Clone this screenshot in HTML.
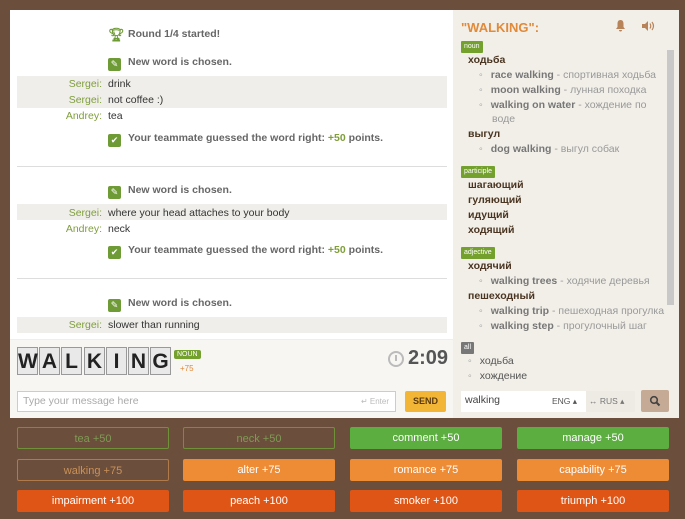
<!DOCTYPE html>
<html><head><meta charset="utf-8"><style>
*{margin:0;padding:0;box-sizing:border-box}
body{width:685px;height:519px;background:#6b4e3b;font-family:"Liberation Sans","DejaVu Sans",sans-serif;position:relative;overflow:hidden;font-size:10.5px}
.a{position:absolute;white-space:nowrap}
#chat{position:absolute;left:10px;top:10px;width:443px;height:408px;background:#fff}
#dict{position:absolute;left:453px;top:10px;width:226px;height:408px;background:#f2efe8}
.band{position:absolute;left:7px;width:430px;background:#efeeea}
.nm{color:#7f9e3c;text-align:right;width:90px;left:2px}
.tx{color:#333;left:98px}
.sys{left:98px;color:#666;font-weight:bold}
.ic{display:inline-block;width:13px;height:13px;background:#6f9b36;border-radius:2px;vertical-align:-2px;margin-right:7px;color:#fff;font-size:9px;text-align:center;line-height:13px}
.sep{position:absolute;left:7px;width:430px;height:1px;background:#ddd}
.tag{position:absolute;left:8px;background:#74a12d;color:#fff;font-size:7px;padding:1px 3px;border-radius:1px;line-height:10px}
.w{color:#4a3522;font-weight:bold;left:15px}
.li{left:26px;color:#999}
.li b{color:#777}
.li:before{content:"◦";margin-right:8px;color:#999}
.btn{position:absolute;width:152px;height:22px;color:#fff;text-align:center;line-height:22px;font-size:11px;border-radius:2px}
.g{background:#5bae3f}.o{background:#ee8b35}.r{background:#df5515}
.og{border:1px solid #6f913a;color:#7f9a55;background:transparent}
.oo{border:1px solid #b07a4a;color:#c9925a;background:transparent}
.tile{position:absolute;top:347px;width:21px;height:28px;background:#e9e9e9;border:1px solid #999;font-weight:bold;font-size:21px;text-align:center;line-height:28px;color:#222;font-family:"Liberation Sans Narrow","Liberation Sans",sans-serif}
</style></head><body>
<div id="chat">
<div class="a sys" style="top:18px"><span class="ic" style="background:none;color:#6f9b36;font-size:13px">🏆︎</span>Round 1/4 started!</div>
<div class="a sys" style="top:46px"><span class="ic">✎</span>New word is chosen.</div>
<div class="band" style="top:66px;height:32px"></div>
<div class="a nm" style="top:68px">Sergei:</div><div class="a tx" style="top:68px">drink</div>
<div class="a nm" style="top:84px">Sergei:</div><div class="a tx" style="top:84px">not coffee :)</div>
<div class="a nm" style="top:100px">Andrey:</div><div class="a tx" style="top:100px">tea</div>
<div class="a sys" style="top:122px"><span class="ic">✔</span>Your teammate guessed the word right: <span style="color:#7f9e3c">+50</span> points.</div>
<div class="sep" style="top:156px"></div>
<div class="a sys" style="top:174px"><span class="ic">✎</span>New word is chosen.</div>
<div class="band" style="top:194px;height:16px"></div>
<div class="a nm" style="top:197px">Sergei:</div><div class="a tx" style="top:197px">where your head attaches to your body</div>
<div class="a nm" style="top:213px">Andrey:</div><div class="a tx" style="top:213px">neck</div>
<div class="a sys" style="top:234px"><span class="ic">✔</span>Your teammate guessed the word right: <span style="color:#7f9e3c">+50</span> points.</div>
<div class="sep" style="top:268px"></div>
<div class="a sys" style="top:287px"><span class="ic">✎</span>New word is chosen.</div>
<div class="band" style="top:307px;height:16px"></div>
<div class="a nm" style="top:309px">Sergei:</div><div class="a tx" style="top:309px">slower than running</div>
<div style="position:absolute;left:0;top:329px;width:443px;height:79px;background:#f7f6f3;border-top:1px solid #eee"></div>
</div>
<div class="tile" style="left:17px">W</div><div class="tile" style="left:39px">A</div><div class="tile" style="left:61px">L</div><div class="tile" style="left:84px">K</div><div class="tile" style="left:106px">I</div><div class="tile" style="left:128px">N</div><div class="tile" style="left:150px">G</div>
<div class="a" style="left:174px;top:350px;background:#74a12d;color:#fff;font-size:7px;padding:1px 3px;border-radius:2px">NOUN</div>
<div class="a" style="left:180px;top:364px;color:#e08a3a;font-size:8px">+75</div>
<div class="a" style="left:388px;top:351px;width:16px;height:16px;border:2px solid #bbb;border-radius:50%"><div style="position:absolute;left:5px;top:2px;width:2px;height:6px;background:#bbb"></div></div>
<div class="a" style="left:408px;top:347px;font-size:20px;font-weight:bold;color:#555">2:09</div>
<div class="a" style="left:17px;top:391px;width:379px;height:21px;background:#fff;border:1px solid #ccc;color:#aaa;padding:3px 5px;font-size:10.5px">Type your message here<span style="position:absolute;right:6px;top:5px;font-size:8px;color:#bbb">↵ Enter</span></div>
<div class="a" style="left:405px;top:391px;width:41px;height:21px;background:#f2b535;border-radius:2px;color:#5a3a10;font-weight:bold;font-size:9px;text-align:center;line-height:21px">SEND</div>
<div id="dict">
<div class="a" style="left:8px;top:10px;color:#e08a3a;font-weight:bold;font-size:13px">"WALKING":</div>
<svg class="a" style="left:161px;top:9px" width="13" height="13" viewBox="0 0 13 13"><path d="M6.5 1C4 1 3.5 3 3.5 5v3L2 10h9L9.5 8V5C9.5 3 9 1 6.5 1z M5 11h3a1.5 1.5 0 0 1-3 0z" fill="#b98359"/></svg>
<svg class="a" style="left:188px;top:10px" width="14" height="12" viewBox="0 0 14 12"><path d="M1 4h3l3-3v10L4 8H1z" fill="#b98359"/><path d="M9 3.5q1.5 2.5 0 5M11 2q3 4 0 8" stroke="#b98359" fill="none" stroke-width="1.2"/></svg>
<div class="a" style="left:214px;top:40px;width:7px;height:255px;background:#c8c8c8"></div>
<div class="tag" style="top:31px">noun</div>
<div class="a w" style="top:44px">ходьба</div>
<div class="a li" style="top:59px"><b>race walking</b> - спортивная ходьба</div>
<div class="a li" style="top:74px"><b>moon walking</b> - лунная походка</div>
<div class="a li" style="top:89px"><b>walking on water</b> - хождение по</div>
<div class="a" style="left:39px;top:103px;color:#999">воде</div>
<div class="a w" style="top:118px">выгул</div>
<div class="a li" style="top:133px"><b>dog walking</b> - выгул собак</div>
<div class="tag" style="top:156px">participle</div>
<div class="a w" style="top:169px">шагающий</div>
<div class="a w" style="top:184px">гуляющий</div>
<div class="a w" style="top:199px">идущий</div>
<div class="a w" style="top:214px">ходящий</div>
<div class="tag" style="top:237px">adjective</div>
<div class="a w" style="top:250px">ходячий</div>
<div class="a li" style="top:265px"><b>walking trees</b> - ходячие деревья</div>
<div class="a w" style="top:280px">пешеходный</div>
<div class="a li" style="top:295px"><b>walking trip</b> - пешеходная прогулка</div>
<div class="a li" style="top:310px"><b>walking step</b> - прогулочный шаг</div>
<div class="tag" style="top:332px;background:#777">all</div>
<div class="a li" style="top:345px;left:15px;color:#555">ходьба</div>
<div class="a li" style="top:360px;left:15px;color:#555">хождение</div>
<div class="a" style="left:8px;top:381px;width:174px;height:21px;background:#fff;padding:3px 4px;color:#444">walking<span style="position:absolute;left:91px;top:5px;font-size:8.5px;color:#555">ENG ▴</span><span style="position:absolute;left:125px;top:0;width:49px;height:21px;background:#eeebe5;font-size:8.5px;color:#777;padding:5px 3px">↔ RUS ▴</span></div>
<div class="a" style="left:188px;top:380px;width:28px;height:22px;background:#c5ab96;border-radius:2px"><svg style="position:absolute;left:8px;top:5px" width="12" height="12" viewBox="0 0 12 12"><circle cx="5" cy="5" r="3.3" stroke="#444" stroke-width="1.6" fill="none"/><path d="M7.5 7.5L10.5 10.5" stroke="#444" stroke-width="2"/></svg></div>
</div>
<div class="btn og" style="left:17px;top:427px">tea +50</div>
<div class="btn og" style="left:183px;top:427px">neck +50</div>
<div class="btn g" style="left:350px;top:427px">comment +50</div>
<div class="btn g" style="left:517px;top:427px">manage +50</div>
<div class="btn oo" style="left:17px;top:459px">walking +75</div>
<div class="btn o" style="left:183px;top:459px">alter +75</div>
<div class="btn o" style="left:350px;top:459px">romance +75</div>
<div class="btn o" style="left:517px;top:459px">capability +75</div>
<div class="btn r" style="left:17px;top:490px">impairment +100</div>
<div class="btn r" style="left:183px;top:490px">peach +100</div>
<div class="btn r" style="left:350px;top:490px">smoker +100</div>
<div class="btn r" style="left:517px;top:490px">triumph +100</div>
</body></html>
